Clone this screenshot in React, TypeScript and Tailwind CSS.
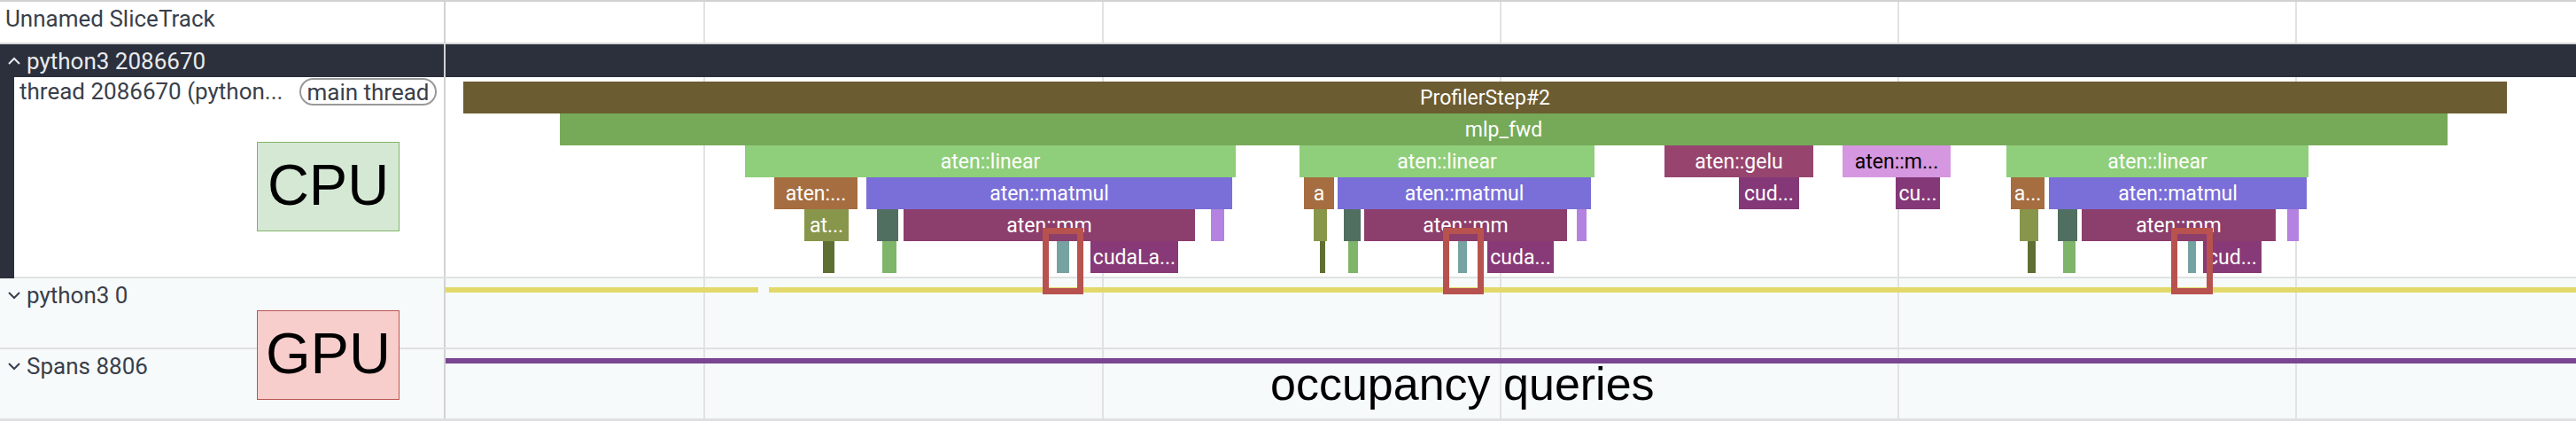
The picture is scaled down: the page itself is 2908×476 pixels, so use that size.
import React from "react";

type S = { x: number; e: number; c: string; t?: string; d?: boolean };
const LEFT = 503;
const GRID = [794, 1244, 1693, 2142, 2591];

const LEVELS: S[][] = [
  [{ x: 523, e: 2830, c: "bg-[#6b5c31]", t: "ProfilerStep#2" }],
  [{ x: 632, e: 2763, c: "bg-[#76aa58]", t: "mlp_fwd" }],
  [
    { x: 841, e: 1395, c: "bg-[#8fce7a]", t: "aten::linear" },
    { x: 1467, e: 1800, c: "bg-[#8fce7a]", t: "aten::linear" },
    { x: 1879, e: 2047, c: "bg-[#97456f]", t: "aten::gelu" },
    { x: 2080, e: 2202, c: "bg-[#d597e0]", t: "aten::m...", d: true },
    { x: 2265, e: 2606, c: "bg-[#8fce7a]", t: "aten::linear" },
  ],
  [
    { x: 874, e: 968, c: "bg-[#a56d40]", t: "aten:..." },
    { x: 978, e: 1391, c: "bg-[#7a6ed8]", t: "aten::matmul" },
    { x: 1472, e: 1506, c: "bg-[#a56d40]", t: "a" },
    { x: 1510, e: 1796, c: "bg-[#7a6ed8]", t: "aten::matmul" },
    { x: 1963, e: 2031, c: "bg-[#843878]", t: "cud..." },
    { x: 2140, e: 2190, c: "bg-[#843878]", t: "cu..." },
    { x: 2270, e: 2308, c: "bg-[#a56d40]", t: "a..." },
    { x: 2313, e: 2604, c: "bg-[#7a6ed8]", t: "aten::matmul" },
  ],
  [
    { x: 908, e: 958, c: "bg-[#88964b]", t: "at..." },
    { x: 990, e: 1014, c: "bg-[#516f61]" },
    { x: 1020, e: 1349, c: "bg-[#8c3e6c]", t: "aten::mm" },
    { x: 1367, e: 1382, c: "bg-[#b482e0]" },
    { x: 1483, e: 1498, c: "bg-[#88964b]" },
    { x: 1517, e: 1536, c: "bg-[#516f61]" },
    { x: 1540, e: 1769, c: "bg-[#8c3e6c]", t: "aten::mm" },
    { x: 1780, e: 1791, c: "bg-[#b482e0]" },
    { x: 2280, e: 2301, c: "bg-[#88964b]" },
    { x: 2323, e: 2345, c: "bg-[#516f61]" },
    { x: 2350, e: 2569, c: "bg-[#8c3e6c]", t: "aten::mm" },
    { x: 2582, e: 2595, c: "bg-[#b482e0]" },
  ],
  [
    { x: 929, e: 942, c: "bg-[#5f6f33]" },
    { x: 996, e: 1012, c: "bg-[#7fb56b]" },
    { x: 1193, e: 1207, c: "bg-[#76a3a1]" },
    { x: 1231, e: 1330, c: "bg-[#873a77]", t: "cudaLa..." },
    { x: 1490, e: 1495, c: "bg-[#5f6f33]" },
    { x: 1522, e: 1533, c: "bg-[#7fb56b]" },
    { x: 1646, e: 1656, c: "bg-[#76a3a1]" },
    { x: 1679, e: 1754, c: "bg-[#873a77]", t: "cuda..." },
    { x: 2289, e: 2298, c: "bg-[#5f6f33]" },
    { x: 2329, e: 2343, c: "bg-[#7fb56b]" },
    { x: 2470, e: 2479, c: "bg-[#76a3a1]" },
    { x: 2487, e: 2553, c: "bg-[#873a77]", t: "cud..." },
  ],
];

const RED = [
  { x: 1177, e: 1223 },
  { x: 1629, e: 1675 },
  { x: 2451, e: 2498 },
];

function Chevron({ up, light }: { up?: boolean; light?: boolean }) {
  return (
    <svg width="14" height="9" viewBox="0 0 14 9" className="shrink-0" fill="none">
      <path
        d={up ? "M1 8 L7 2 L13 8" : "M1 1 L7 7 L13 1"}
        stroke={light ? "#e8eaee" : "#3a3f4a"}
        strokeWidth="2"
      />
    </svg>
  );
}

function Grid() {
  return (
    <>
      {GRID.map((g) => (
        <div key={g} className="absolute top-0 bottom-0 w-[2px] bg-[#e2e2e2]" style={{ left: g - LEFT }} />
      ))}
    </>
  );
}

function Label({ children }: { children: React.ReactNode }) {
  return <span className="text-[26px] leading-none text-[#3a3f4a] whitespace-nowrap">{children}</span>;
}

function Collapsed({ name, line }: { name: string; line: React.ReactNode }) {
  return (
    <div className="flex h-[78px] bg-[#f6fafb]">
      <div className="w-[501px] shrink-0 flex items-start gap-[7px] pl-[9px] pt-[6px]">
        <div className="h-[26px] flex items-center">
          <Chevron />
        </div>
        <Label>{name}</Label>
      </div>
      <div className="w-[2px] bg-[#d2d2d2]" />
      <div className="relative flex-1">
        <Grid />
        {line}
      </div>
    </div>
  );
}

export default function App() {
  return (
    <div
      className="relative w-[2908px] h-[476px] overflow-hidden bg-white flex flex-col"
      style={{ fontFamily: "Roboto, sans-serif" }}
    >
      <div className="h-[2px] shrink-0 bg-[#d2d2d2]" />
      <div className="flex h-[46px] shrink-0">
        <div className="w-[501px] shrink-0 pl-[6px] pt-[6px]">
          <Label>Unnamed SliceTrack</Label>
        </div>
        <div className="w-[2px] bg-[#d2d2d2]" />
        <div className="relative flex-1">
          <Grid />
        </div>
      </div>
      <div className="h-[2px] shrink-0 bg-[#d8d8d8]" />

      <div className="flex h-[37px] shrink-0 bg-[#2c303c]">
        <div className="w-[501px] shrink-0 flex items-center gap-[7px] pl-[9px]">
          <Chevron up light />
          <span className="text-[26px] leading-none text-[#e8eaee] whitespace-nowrap">python3 2086670</span>
        </div>
        <div className="w-[2px] bg-[#d2d2d2]" />
      </div>

      <div className="flex h-[225px] shrink-0">
        <div className="w-[501px] shrink-0 border-l-[16px] border-[#2c303c] flex items-start justify-between pl-[6px] pr-[8px] pt-[1px]">
          <span className="text-[26px] leading-[31px] text-[#3a3f4a] whitespace-nowrap">thread 2086670 (python...</span>
          <span className="h-[31px] w-[155px] rounded-full border-2 border-[#999999] text-[26px] leading-[26px] text-[#3a3f4a] flex items-center justify-center whitespace-nowrap">
            main thread
          </span>
        </div>
        <div className="w-[2px] bg-[#d2d2d2]" />
        <div className="relative flex-1 pt-[5px]">
          <Grid />
          {LEVELS.map((row, i) => (
            <div key={i} className="relative h-[36px]">
              {row.map((s) => (
                <div
                  key={s.x}
                  className={`absolute top-0 h-[36px] flex items-center justify-center overflow-hidden px-[3px] text-[23px] leading-none whitespace-nowrap ${s.c} ${s.d ? "text-black" : "text-white"}`}
                  style={{ left: s.x - LEFT, width: s.e - s.x }}
                >
                  {s.t}
                </div>
              ))}
            </div>
          ))}
        </div>
      </div>
      <div className="h-[2px] shrink-0 bg-[#e0e2e2] border-l-[16px] border-[#2c303c]" />

      <Collapsed
        name="python3 0"
        line={
          <div className="absolute left-0 right-0 top-[10px] h-[6px] flex">
            <div className="w-[353px] bg-[#e3d96b]" />
            <div className="w-[12px]" />
            <div className="flex-1 bg-[#e3d96b]" />
          </div>
        }
      />
      <div className="h-[2px] shrink-0 bg-[#e0e0e2]" />
      <Collapsed
        name="Spans 8806"
        line={<div className="absolute left-0 right-0 top-[10px] h-[6px] bg-[#7a4591]" />}
      />
      <div className="h-[3px] shrink-0 bg-[#e0e0e2]" />

      {RED.map((r) => (
        <div
          key={r.x}
          className="absolute top-[257px] h-[75px] border-[7px] border-[#b8524f]"
          style={{ left: r.x, width: r.e - r.x }}
        />
      ))}
      <div
        className="absolute left-[290px] top-[160px] w-[161px] h-[101px] pb-[3px] bg-[#d5e8d4] border border-[#82b366] flex items-center justify-center text-[65px] text-black"
        style={{ fontFamily: '"Liberation Sans", sans-serif' }}
      >
        CPU
      </div>
      <div
        className="absolute left-[290px] top-[350px] w-[161px] h-[101px] pb-[3px] bg-[#f8cecc] border border-[#b85450] flex items-center justify-center text-[65px] text-black"
        style={{ fontFamily: '"Liberation Sans", sans-serif' }}
      >
        GPU
      </div>
      <div
        className="absolute left-[1434px] top-[403px] text-[52px] leading-[60px] text-black whitespace-nowrap"
        style={{ fontFamily: '"Liberation Sans", sans-serif' }}
      >
        occupancy queries
      </div>
    </div>
  );
}
